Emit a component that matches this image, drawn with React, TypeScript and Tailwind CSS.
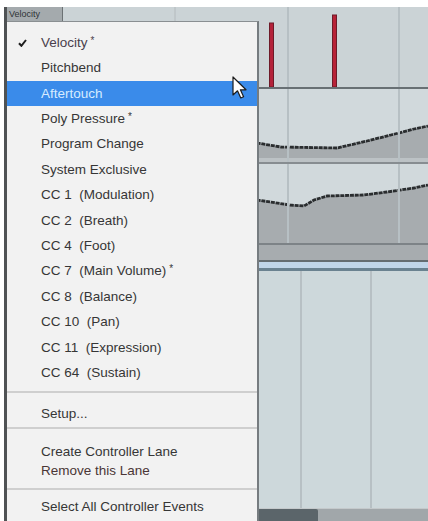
import React from "react";

type Item = { label: string; star?: boolean; checked?: boolean; active?: boolean };

const controllers: Item[] = [
  { label: "Velocity", star: true, checked: true },
  { label: "Pitchbend" },
  { label: "Aftertouch", active: true },
  { label: "Poly Pressure", star: true },
  { label: "Program Change" },
  { label: "System Exclusive" },
  { label: "CC 1  (Modulation)" },
  { label: "CC 2  (Breath)" },
  { label: "CC 4  (Foot)" },
  { label: "CC 7  (Main Volume)", star: true },
  { label: "CC 8  (Balance)" },
  { label: "CC 10  (Pan)" },
  { label: "CC 11  (Expression)" },
  { label: "CC 64  (Sustain)" },
];

const GridLines = ({ h, xs }: { h: number; xs: number[] }) => (
  <>
    {xs.map((x) => (
      <line key={x} x1={x} y1={0} x2={x} y2={h} stroke="#b7c0c4" strokeWidth={2} />
    ))}
  </>
);

const Curve = ({ h, pts }: { h: number; pts: [number, number][] }) => {
  const line = pts.map(([x, y]) => `${x},${y}`).join(" ");
  const area = `7,${h} ${line} 428,${h}`;
  return (
    <>
      <polygon points={area} fill="#a7acaf" />
      <polyline points={line} fill="none" stroke="#2a2d2f" strokeWidth={2.8} strokeDasharray="4 0.8" />
    </>
  );
};

const Check = () => (
  <svg width="9" height="8" viewBox="0 0 9 8">
    <path d="M1 4.2 L3.4 6.8 L8 1" fill="none" stroke="#1e1e1e" strokeWidth={2} />
  </svg>
);

const Row = ({ item }: { item: Item }) => (
  <div
    className={
      "h-[25.4px] flex items-center pl-[11px] " + (item.active ? "bg-[#3a8bea] text-[#d6ebff]" : "text-[#363636]")
    }
  >
    <div className="w-[23px] flex items-center">{item.checked && <Check />}</div>
    <span className={"whitespace-pre " + (item.checked ? "text-[#4a3f4d]" : "")}>
      {item.label}
      {item.star && <span className="relative -top-[3px] ml-[3px] text-[10px]">*</span>}
    </span>
  </div>
);

const Sep = ({ mt }: { mt: string }) => <div className={"h-[2px] bg-[#cfcfcf] " + mt} />;

export default function App() {
  return (
    <div className="relative w-[428px] h-[521px] overflow-hidden bg-white pt-[7px] pl-[4px] flex flex-col font-['Liberation_Sans',Arial,sans-serif]">
      <div className="flex-1 flex flex-col border-l-[3px] border-[#4f5254]">
        {/* velocity lane */}
        <div className="h-[80px] grid bg-[#cbd3d6]">
          <svg className="[grid-area:1/1] w-full h-full" viewBox="7 0 421 80" preserveAspectRatio="none">
            <line x1={175} y1={0} x2={175} y2={14} stroke="#b4babd" strokeWidth={1} />
            <GridLines h={80} xs={[288, 399]} />
            <rect x={269.5} y={16} width={4} height={64} fill="#b4223a" stroke="#6e1a28" strokeWidth={1} />
            <rect x={332.5} y={8} width={4} height={72} fill="#b82237" stroke="#6e1a28" strokeWidth={1} />
          </svg>
          <div className="[grid-area:1/1] self-start flex h-[14px]">
            <div className="w-[56px] bg-[#a4aaad] border-r border-[#6b7174] text-[9px] leading-[14px] pl-[2px] text-[#2f3336]">
              Velocity
            </div>
          </div>
        </div>
        <div className="h-[2px] bg-[#687074]" />

        {/* pitchbend-like lane */}
        <div className="h-[73px] bg-[#d1d9dc]">
          <svg className="w-full h-full" viewBox="7 0 421 73" preserveAspectRatio="none">
            <Curve
              h={69}
              pts={[
                [7, 54],
                [257, 54],
                [281, 58],
                [337, 59],
                [350, 56],
                [367, 52],
                [391, 46],
                [414, 40],
                [428, 37],
              ]}
            />
            <rect x={7} y={69} width={421} height={4} fill="#bcc2c5" />
            <GridLines h={73} xs={[288, 399]} />
          </svg>
        </div>
        <div className="h-[2px] bg-[#878d91]" />

        <div className="h-[79px] bg-[#d1d9dc]">
          <svg className="w-full h-full" viewBox="7 0 421 79" preserveAspectRatio="none">
            <Curve
              h={79}
              pts={[
                [7, 36],
                [257, 36],
                [290, 41],
                [304, 42],
                [314, 36],
                [327, 32],
                [364, 31],
                [387, 28],
                [414, 24],
                [428, 21],
              ]}
            />
            <GridLines h={79} xs={[288, 399]} />
          </svg>
        </div>
        <div className="h-[2px] bg-[#7d8387]" />
        <div className="h-[15px] bg-[#a7acaf]" />
        <div className="h-[2px] bg-[#646c70]" />
        <div className="h-[6px] bg-[#c0d5e8]" />
        <div className="h-[3px] bg-[#6a8290]" />

        {/* empty lane */}
        <div className="flex-1 bg-[#cdd8db]">
          <svg className="w-full h-full" viewBox="7 0 421 237" preserveAspectRatio="none">
            <GridLines h={237} xs={[301, 371]} />
          </svg>
        </div>

        {/* scrollbar */}
        <div className="h-[13px] flex bg-[#a1a7aa] border-t border-[#c4c9cb]">
          <div className="ml-[250px] w-[61px] bg-[#5b656a] rounded-tr-[2px]" />
        </div>
      </div>

      {/* dropdown menu */}
      <div className="absolute left-[7px] top-[21px] bottom-0 w-[252px] bg-[#f2f2f2] border-t border-[#8a8f92] border-r-2 border-r-[#767c80] text-[13.5px] flex flex-col pt-[8.3px]">
        {controllers.map((it) => (
          <Row key={it.label} item={it} />
        ))}
        <Sep mt="mt-[5px]" />
        <div className="mt-[10px] h-[22px] flex items-center pl-[34px] text-[#363636]">Setup...</div>
        <Sep mt="mt-[2px]" />
        <div className="mt-[13px] h-[20px] flex items-center pl-[34px] text-[#363636]">Create Controller Lane</div>
        <div className="h-[18px] flex items-center pl-[34px] text-[#4a3636]">Remove this Lane</div>
        <Sep mt="mt-[8px]" />
        <div className="mt-[7px] h-[20px] flex items-center pl-[34px] text-[#363636]">Select All Controller Events</div>
      </div>

      {/* mouse pointer */}
      <svg className="absolute left-[232px] top-[76px]" width="15" height="24" viewBox="0 0 15 24">
        <path
          d="M1 1 L1 19 L5.5 14.8 L8.8 22 L11.6 20.8 L8.4 13.8 L14 13.8 Z"
          fill="#ffffff"
          stroke="#1c1c1c"
          strokeWidth={1.2}
          strokeLinejoin="round"
        />
      </svg>
    </div>
  );
}
